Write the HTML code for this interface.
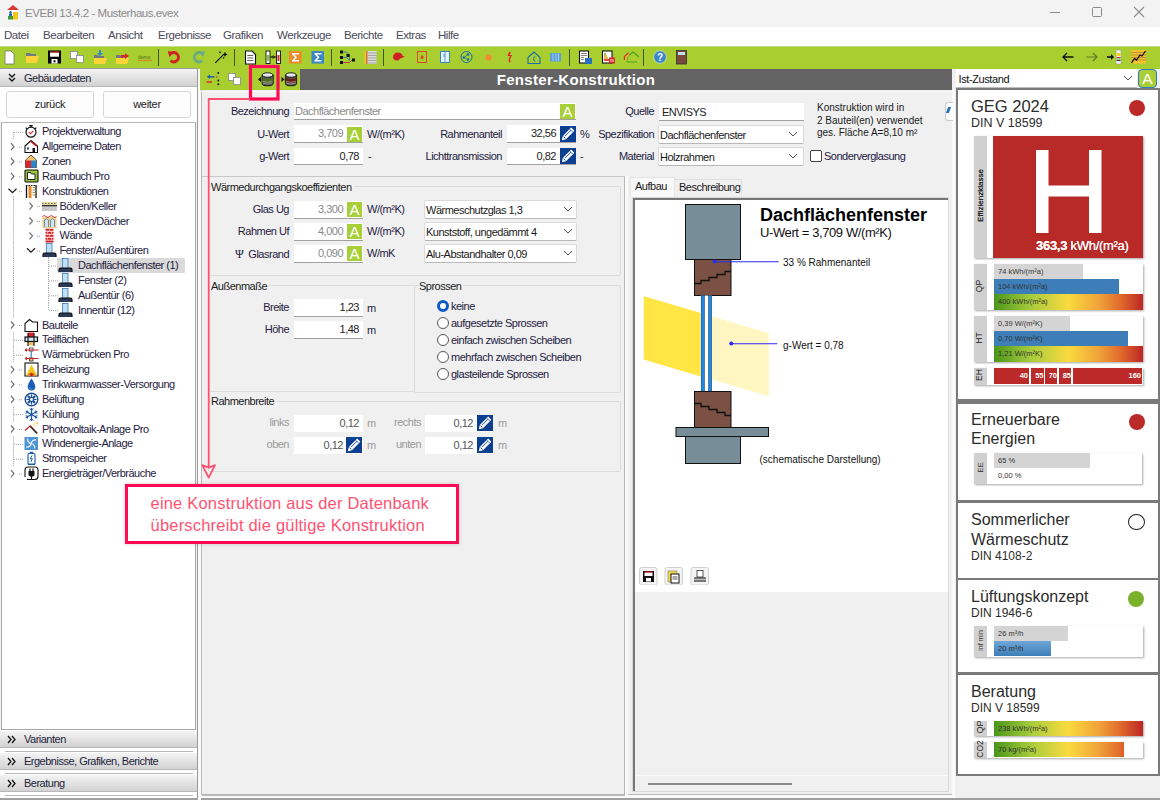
<!DOCTYPE html>
<html><head><meta charset="utf-8">
<style>
*{margin:0;padding:0;box-sizing:border-box}
html,body{width:1160px;height:800px;overflow:hidden;background:#f0f0f0;font-family:"Liberation Sans",sans-serif;font-size:11px;color:#1a1a1a;position:relative}
.a{position:absolute}
.menu span{position:absolute;top:0;font-size:11.5px;letter-spacing:-0.45px;color:#4a4a5a;white-space:nowrap}
.tr{letter-spacing:-0.5px;position:absolute;height:15px;font-size:11px;line-height:15px;color:#1e2040;white-space:nowrap}
.lbl{letter-spacing:-0.5px;position:absolute;font-size:11px;white-space:nowrap;color:#1e2040;text-align:right}
.inp{letter-spacing:-0.5px;position:absolute;background:#fff;border-bottom:1px solid #a0a0a0;font-size:11px;white-space:nowrap;overflow:hidden}
.num{text-align:right;padding-right:4px}
.btnA{position:absolute;background:#a9cf38;color:#fff;font-size:15px;line-height:16px;text-align:center}
.pen{position:absolute;background:#0d3d8c}
.dd{letter-spacing:-0.5px;position:absolute;background:#fff;border:1px solid #dadada;border-bottom:1px solid #b8b8b8;border-radius:2px;font-size:11px;white-space:nowrap;overflow:hidden;padding-left:1px}
.grp{position:absolute;border:1px solid #dcdcdc;border-radius:2px}
.gt{letter-spacing:-0.5px;position:absolute;font-size:11px;background:#f0f0f0;white-space:nowrap;color:#1a1a1a;padding-right:2px}
.radio{position:absolute;width:12px;height:12px;border:1px solid #333;border-radius:50%;background:#fff}
.rt{letter-spacing:-0.5px;position:absolute;font-size:11px;white-space:nowrap;color:#1e2040}
.acc{position:absolute;left:0;width:197px;height:17px;background:linear-gradient(#f4f4f4,#d2d2d2);border-bottom:1px solid #b8b8b8}
.acc span{letter-spacing:-0.5px;position:absolute;left:24px;top:2px;font-size:11px;color:#22223a}
.card{position:absolute;left:956px;width:204px;background:#fff}
.ct{position:absolute;left:15px;font-size:16px;color:#2b2b2b;white-space:nowrap}
.cs{position:absolute;left:15px;font-size:12px;color:#2b2b2b;white-space:nowrap}
.bx{position:absolute;background:#fff;box-shadow:1px 1px 2px rgba(0,0,0,0.35)}
.strip{position:absolute;left:0;top:0;width:13px;height:100%;background:#d0d0d0}
.bar{position:absolute;left:20px;font-size:7.5px;line-height:15px;padding-left:4px;color:#333;white-space:nowrap}
.grad{background:linear-gradient(90deg,#4a961a 0%,#a8cc3c 25%,#fada3e 50%,#f0a43a 70%,#e06a2c 85%,#bc2626 100%);background-size:149px 100%;background-repeat:no-repeat}
.vt{position:absolute;transform:rotate(-90deg);transform-origin:center;font-size:7px;white-space:nowrap;color:#333}
</style></head><body>
<!-- TITLE BAR -->
<div class="a" style="left:0;top:0;width:1160px;height:27px;background:#f3f3f3"></div>
<svg class="a" style="left:6px;top:4px" width="14" height="16" viewBox="0 0 14 16">
<path d="M1 6 L7 1 L13 6 Z" fill="#d9382f"/>
<rect x="2" y="6" width="10" height="9" fill="#fff"/>
<rect x="2" y="12" width="5" height="3.5" fill="#3d9a3a"/>
<rect x="7" y="8" width="5" height="7.5" fill="#f5c518"/>
<circle cx="4.5" cy="8.5" r="1.5" fill="#2a6db5"/>
<rect x="3" y="10" width="3" height="2" fill="#2a6db5"/>
</svg>
<div class="a" style="left:25px;top:7px;font-size:11.5px;letter-spacing:-0.45px;color:#8a8a8a;white-space:nowrap">EVEBI 13.4.2 - Musterhaus.evex</div>
<div class="a" style="left:1050px;top:12px;width:10px;height:1px;background:#8a8a8a"></div>
<div class="a" style="left:1092px;top:7px;width:10px;height:10px;border:1px solid #8a8a8a;border-radius:1.5px"></div>
<svg class="a" style="left:1133px;top:6px" width="12" height="12" viewBox="0 0 12 12"><path d="M1 1L11 11M11 1L1 11" stroke="#8a8a8a" stroke-width="1.1"/></svg>
<!-- MENU -->
<div class="a" style="left:0;top:27px;width:1160px;height:19px;background:#fff"></div>
<div class="a menu" style="top:29px">
<span style="left:4px">Datei</span><span style="left:43px">Bearbeiten</span><span style="left:108px">Ansicht</span><span style="left:158px">Ergebnisse</span><span style="left:223px">Grafiken</span><span style="left:277px">Werkzeuge</span><span style="left:344px">Berichte</span><span style="left:396px">Extras</span><span style="left:438px">Hilfe</span>
</div>
<!-- TOOLBAR -->
<div class="a" style="left:0;top:46px;width:1160px;height:23px;background:#a8cf2f;border-top:1px solid #c2e07a"></div>
<svg class="a" style="left:0;top:46px" width="1160" height="23" viewBox="0 46 1160 23">
<!-- new doc -->
<path d="M5 51h6l3 3v10h-9z" fill="#fff" stroke="#777" stroke-width="0.8"/>
<!-- folder -->
<path d="M26 53h4l1 1h5v2h-10z" fill="#6f7a80"/><path d="M26 56h13l-2 7h-11z" fill="#fdd33a"/>
<!-- save -->
<rect x="48" y="50.5" width="13" height="13" fill="#000"/><rect x="50" y="51.5" width="9" height="1.2" fill="#e02020"/><rect x="50" y="52.7" width="9" height="4" fill="#fff"/><rect x="51.5" y="59" width="6" height="4.5" fill="#fff"/><rect x="53.5" y="60.3" width="2" height="2" fill="#000"/>
<!-- copy -->
<rect x="70.5" y="51.5" width="7" height="7" fill="#fff" stroke="#888" stroke-width="0.8"/><rect x="76.5" y="55.5" width="7" height="7" fill="#fff" stroke="#888" stroke-width="0.8"/>
<!-- download folder -->
<path d="M94 55h4l1 1h5v2h-10z" fill="#6f7a80"/><path d="M94 58h13l-2 6h-11z" fill="#fdd33a"/><path d="M99 50h2v3h2l-3 3l-3-3h2z" fill="#2e86c9"/>
<!-- share folder -->
<path d="M116 55h4l1 1h5v2h-10z" fill="#6f7a80"/><path d="M116 58h13l-2 6h-11z" fill="#fdd33a"/><path d="M121 58v-3h4v-2l4 3l-4 3v-2h-2v1z" fill="#d8262d"/>
<!-- demo -->
<text x="138" y="59" font-size="5" fill="#5a6a20" font-family="Liberation Sans">demo</text><rect x="138" y="60" width="14" height="0.8" fill="#e07030"/>
<rect x="158" y="49" width="1" height="17" fill="#44571a"/>
<!-- undo -->
<path d="M172 53 A4.6 4.6 0 1 1 170.6 60.5" fill="none" stroke="#d02026" stroke-width="2.8"/><path d="M167.8 51.2 L174.5 51.8 L169.5 57.2 Z" fill="#d02026"/>
<!-- redo -->
<path d="M200.8 53 A4.6 4.6 0 1 0 202.2 60.5" fill="none" stroke="#6aaa80" stroke-width="2.8"/><path d="M205 51.2 L198.3 51.8 L203.3 57.2 Z" fill="#6aaa80"/>
<!-- wand -->
<path d="M215.3 62.8 L223.5 54.6" stroke="#111" stroke-width="1.1"/><path d="M225 51.8l0.8 1.8l1.8 0.8l-1.8 0.8l-0.8 1.8l-0.8-1.8l-1.8-0.8l1.8-0.8z" fill="#111"/><circle cx="220" cy="52.3" r="0.9" fill="#111"/><circle cx="223.6" cy="58" r="0.8" fill="#111"/>
<rect x="234" y="49" width="1" height="17" fill="#44571a"/>
<!-- doc -->
<path d="M245.5 51h6.5l3.5 3.5v9.5h-10z" fill="#fff" stroke="#111" stroke-width="1.1"/><path d="M247.3 55.5h6M247.3 58h6M247.3 60.5h6" stroke="#222" stroke-width="0.7"/>
<!-- compare -->
<rect x="266" y="51" width="4" height="12.5" fill="#fff" stroke="#111" stroke-width="0.9"/><rect x="276.5" y="51" width="4" height="12.5" fill="#fff" stroke="#111" stroke-width="0.9"/><path d="M267 55h2v6h-2z" fill="#7cc242"/><path d="M277.5 55h2v6h-2z" fill="#d8262d"/><path d="M270 57h6.5" stroke="#111" stroke-width="1"/><circle cx="273.2" cy="57" r="1.2" fill="none" stroke="#111" stroke-width="0.7"/>
<!-- sigma orange -->
<rect x="289" y="51" width="12.5" height="12.5" fill="#ee8a2c"/><path d="M292 53h7v1.5h-4.6l2.6 2.8l-2.6 2.8h4.6v1.5h-7v-1.2l3-3.1l-3-3.1z" fill="#fff"/>
<!-- sigma blue -->
<rect x="311.5" y="51" width="12.5" height="12.5" fill="#3b86c4"/><path d="M314.5 53h7v1.5h-4.6l2.6 2.8l-2.6 2.8h4.6v1.5h-7v-1.2l3-3.1l-3-3.1z" fill="#fff"/>
<rect x="331" y="49" width="1" height="17" fill="#44571a"/>
<!-- tree -->
<path d="M341.5 52h5l3 3v5M341.5 57.5h5l3 3M341.5 62.5h8l3-3" fill="none" stroke="#1b6fa8" stroke-width="0.8"/><path d="M341.5 62.5h8l3-3" fill="none" stroke="#d8262d" stroke-width="0.8"/>
<rect x="340" y="50.5" width="3" height="3" fill="#111"/><rect x="340" y="56" width="3" height="3" fill="#111"/><rect x="340" y="61" width="3" height="3" fill="#111"/><rect x="346.5" y="54" width="3" height="3" fill="#111"/><rect x="352" y="58.5" width="3" height="3" fill="#111"/>
<!-- brick list -->
<rect x="364.5" y="51" width="2" height="13" fill="#f7c22b"/><rect x="366.5" y="51" width="1" height="13" fill="#d8262d"/><rect x="367.5" y="51" width="9" height="13" fill="#ddd"/><path d="M367.5 53h9M367.5 55.5h9M367.5 58h9M367.5 60.5h9M367.5 63h9" stroke="#888" stroke-width="0.7"/>
<rect x="383" y="49" width="1" height="17" fill="#44571a"/>
<!-- cap -->
<path d="M393 58 Q393 52.5 398 52.5 Q402 52.5 402.5 56 L405 56.5 L403 57.5 Q400 58 398 60.5 Q394 61 393 58z" fill="#d02026"/>
<!-- fire frame -->
<rect x="417.5" y="51.5" width="9" height="11" fill="none" stroke="#e0482a" stroke-width="1"/><path d="M422 54.5q2 2 1.5 4q-1.5 1-3 0q0-2 1.5-4z" fill="#e0482a"/>
<!-- window frame -->
<rect x="440.5" y="51.5" width="9" height="11" fill="#e8f4fb" stroke="#3b86c4" stroke-width="1"/><path d="M445 52v10M444 54v3" stroke="#3b86c4" stroke-width="0.8"/>
<!-- network -->
<circle cx="466.5" cy="57" r="5.5" fill="none" stroke="#1b6fa8" stroke-width="1"/><circle cx="463.8" cy="57.5" r="1.3" fill="#1b6fa8"/><circle cx="468" cy="54.5" r="1.3" fill="#1b6fa8"/><circle cx="468" cy="59.5" r="1.3" fill="#1b6fa8"/><path d="M464 57.5l4-3M464 57.5l4 2" stroke="#1b6fa8" stroke-width="0.7"/>
<!-- sun -->
<circle cx="488.5" cy="57.5" r="3" fill="#f28b2e"/><path d="M488.5 51.5v1.5M488.5 62v1.5M482.5 57.5h1.5M493 57.5h1.5M484.3 53.3l1 1M491.7 60.7l1 1M484.3 61.7l1-1M491.7 54.3l1-1" stroke="#f5a45e" stroke-width="0.8"/>
<!-- lightning -->
<path d="M509 52l-1.5 4h2.5l-1.5 4l0.5 2.5l1.5-0.5l-0.5-2.5l2-4.5h-2.5l1.5-3z" fill="#d8262d"/>
<!-- house euro -->
<path d="M528 57.5l6-5.5l6 5.5v6h-12z" fill="none" stroke="#1b6fa8" stroke-width="1.1"/><path d="M535.5 56.5q-2 0-2 2.5q0 2.5 2 2.5" fill="none" stroke="#1b6fa8" stroke-width="0.9"/>
<!-- solar panel -->
<rect x="550" y="53" width="11" height="8.5" fill="#5aa0d6"/><path d="M553 53.5v7.5M556 53.5v7.5M558.5 53.5v7.5" stroke="#cfe6f5" stroke-width="0.6"/>
<rect x="569" y="49" width="1" height="17" fill="#44571a"/>
<!-- report -->
<rect x="579.5" y="51" width="9" height="12" fill="#fff" stroke="#111" stroke-width="1.1"/><path d="M581 53.5h6M581 55.5h6M581 57.5h3M581 59.5h3" stroke="#555" stroke-width="0.7"/><rect x="585" y="58" width="7" height="6" fill="#2a70c0"/>
<!-- energy cert -->
<rect x="602.5" y="51" width="9.5" height="12" fill="#fff" stroke="#111" stroke-width="1.1"/><path d="M604 54h2M604 56h3M604 58h4M604 60h5" stroke-width="1.4" stroke="#e0a020"/><path d="M604 54h2" stroke="#7cc242" stroke-width="1.4"/><path d="M604 60h5" stroke="#d8262d" stroke-width="1.4"/><rect x="609" y="57.5" width="6" height="6" fill="#d8262d"/><path d="M611 59v3M613 59v3" stroke="#fff" stroke-width="0.8"/>
<!-- colored house -->
<path d="M627 62v-5l6-5l6 5M627 62h10" fill="none" stroke="#4da020" stroke-width="1.2"/><path d="M624.5 60v-3.5l4-3.5" fill="none" stroke="#d8262d" stroke-width="1.3"/><path d="M626 61v-4l3-2.5" fill="none" stroke="#f7c22b" stroke-width="1.3"/>
<rect x="643" y="49" width="1" height="17" fill="#44571a"/>
<!-- help -->
<circle cx="660" cy="57" r="6.3" fill="#3b86c4" stroke="#e8f0e0" stroke-width="0.6"/><text x="660" y="61" font-size="10" font-weight="bold" fill="#fff" text-anchor="middle" font-family="Liberation Sans">?</text>
<!-- door -->
<rect x="676.5" y="50.5" width="10" height="13.5" fill="#7a4a3a" stroke="#333" stroke-width="0.8"/><rect x="678" y="52" width="7" height="3" fill="#bfe3f5"/>
<!-- right arrows -->
<path d="M1063 57h10.5M1067 53l-4 4l4 4" fill="none" stroke="#111" stroke-width="1.3"/>
<path d="M1086.5 57h10.5M1093 53l4 4l-4 4" fill="none" stroke="#5a7a28" stroke-width="1.1"/>
<path d="M1107 57h5" stroke="#111" stroke-width="1.6"/><path d="M1111 54l3 3l-3 3z" fill="#111"/>
<rect x="1116" y="50" width="5" height="14" fill="#eee" stroke="#999" stroke-width="0.5"/><rect x="1116.5" y="53" width="4" height="3" fill="#f7d21b"/><rect x="1116.5" y="57" width="4" height="1" fill="#d8262d"/><rect x="1116.5" y="58.5" width="4" height="1" fill="#4da020"/><rect x="1116.5" y="60" width="4" height="1" fill="#333"/>
<rect x="1131" y="50" width="15" height="13.5" fill="#f7c22b"/><path d="M1131 52.5h15M1131 55h15M1131 57.5h15M1131 60h15" stroke="#a88a40" stroke-width="0.8"/><path d="M1131.5 63l3-4.5l2 1.5l3.5-5l2 1l3.5-5" fill="none" stroke="#111" stroke-width="1.3"/>
</svg>
<!-- LEFT PANEL -->
<div class="a" style="left:0;top:69px;width:198px;height:731px;background:#f0f0f0"></div>
<div class="a" style="left:197px;top:68px;width:1px;height:732px;background:#9a9a9a"></div>
<div class="acc" style="top:68px;height:19px;border-top:1px solid #9a9a9a"><span style="top:3px">Gebäudedaten</span></div>
<svg class="a" style="left:8px;top:73px" width="8" height="10" viewBox="0 0 8 10"><path d="M1 1l3 3l3-3M1 5l3 3l3-3" fill="none" stroke="#111" stroke-width="1.3"/></svg>
<div class="a" style="left:0;top:87px;width:197px;height:35px;background:#fff"></div>
<div class="a" style="left:6px;top:91px;width:88px;height:27px;border:1px solid #d6d6d6;border-radius:3px;background:#fdfdfd;text-align:center;line-height:25px;font-size:11px;letter-spacing:-0.3px;color:#222">zurück</div>
<div class="a" style="left:103px;top:91px;width:88px;height:27px;border:1px solid #d6d6d6;border-radius:3px;background:#fdfdfd;text-align:center;line-height:25px;font-size:11px;letter-spacing:-0.3px;color:#222">weiter</div>
<div class="a" style="left:1px;top:122px;width:195px;height:608px;background:#fff;border:1px solid #a8a8a8;border-top-color:#b8b8b8"></div>
<svg class="a" style="left:0;top:122px" width="197" height="608" viewBox="0 122 197 608"><g stroke="#a0a0a0" stroke-width="1" stroke-dasharray="1,1" fill="none"><path d="M13.5 131.8 V139.2"/><path d="M14 132.3 H23"/><path d="M19 147.2 H23"/><path d="M19 162.0 H23"/><path d="M19 176.9 H23"/><path d="M19 191.7 H23"/><path d="M13.5 198.7 V213.5"/><path d="M37 206.6 H41"/><path d="M13.5 213.6 V228.4"/><path d="M37 221.5 H41"/><path d="M13.5 228.4 V243.2"/><path d="M37 236.3 H41"/><path d="M13.5 243.3 V258.1"/><path d="M37 251.2 H41"/><path d="M13.5 258.1 V272.9"/><path d="M48.5 258.1 V272.9"/><path d="M49 266.0 H58"/><path d="M13.5 273.0 V287.8"/><path d="M48.5 273.0 V287.8"/><path d="M49 280.9 H58"/><path d="M13.5 287.9 V302.7"/><path d="M48.5 287.9 V302.7"/><path d="M49 295.8 H58"/><path d="M13.5 302.7 V317.5"/><path d="M48.5 302.7 V310.1"/><path d="M49 310.6 H58"/><path d="M19 325.5 H23"/><path d="M13.5 332.4 V347.2"/><path d="M14 340.3 H23"/><path d="M13.5 347.3 V362.1"/><path d="M14 355.2 H23"/><path d="M19 370.1 H23"/><path d="M19 384.9 H23"/><path d="M19 399.8 H23"/><path d="M13.5 406.7 V421.5"/><path d="M14 414.6 H23"/><path d="M19 429.5 H23"/><path d="M13.5 436.5 V451.3"/><path d="M14 444.4 H23"/><path d="M13.5 451.3 V466.1"/><path d="M14 459.2 H23"/><path d="M19 474.1 H23"/><path d="M13.5 196.2 V198.6"/><path d="M48.5 256.7 V258.1"/></g><path d="M11.0 143.2l3 3.5l-3 3.5" fill="none" stroke="#707070" stroke-width="1.2"/><path d="M11.0 158.0l3 3.5l-3 3.5" fill="none" stroke="#707070" stroke-width="1.2"/><path d="M11.0 172.9l3 3.5l-3 3.5" fill="none" stroke="#707070" stroke-width="1.2"/><path d="M8.5 188.7l4 4l4-4" fill="none" stroke="#222" stroke-width="1.3"/><path d="M29.5 202.6l3 3.5l-3 3.5" fill="none" stroke="#707070" stroke-width="1.2"/><path d="M29.5 217.5l3 3.5l-3 3.5" fill="none" stroke="#707070" stroke-width="1.2"/><path d="M29.5 232.3l3 3.5l-3 3.5" fill="none" stroke="#707070" stroke-width="1.2"/><path d="M27.0 248.2l4 4l4-4" fill="none" stroke="#222" stroke-width="1.3"/><path d="M11.0 321.5l3 3.5l-3 3.5" fill="none" stroke="#707070" stroke-width="1.2"/><path d="M11.0 366.1l3 3.5l-3 3.5" fill="none" stroke="#707070" stroke-width="1.2"/><path d="M11.0 380.9l3 3.5l-3 3.5" fill="none" stroke="#707070" stroke-width="1.2"/><path d="M11.0 395.8l3 3.5l-3 3.5" fill="none" stroke="#707070" stroke-width="1.2"/><path d="M11.0 425.5l3 3.5l-3 3.5" fill="none" stroke="#707070" stroke-width="1.2"/><path d="M11.0 470.1l3 3.5l-3 3.5" fill="none" stroke="#707070" stroke-width="1.2"/></svg>
<div class="a" style="left:57px;top:258px;width:128px;height:15px;background:#dadada;border-radius:1px"></div>
<svg class="a" style="left:23.5px;top:124.3px" width="15" height="15" viewBox="0 0 15 15"><circle cx="7" cy="8.2" r="5" fill="#fff" stroke="#111" stroke-width="1.2"/><path d="M5.3 1.6h3.4M7 2v1.2M1.8 3.6l1.2 1.2M12.2 3.6l-1.2 1.2" stroke="#111" stroke-width="1.2"/><path d="M4.8 8.2l1.7 1.6l2.8-3" fill="none" stroke="#d02026" stroke-width="1.1"/></svg>
<div class="tr" style="left:42.0px;top:124.3px">Projektverwaltung</div>
<svg class="a" style="left:23.5px;top:139.2px" width="15" height="15" viewBox="0 0 15 15"><path d="M1 7l6-5.5l6.5 5.5v6.5h-12.5z" fill="#fff" stroke="#111" stroke-width="1.1"/><path d="M6.5 1.5l7 5.5l-1.5 0.6l-5.5-4.4z" fill="#d02026"/><ellipse cx="4" cy="9.5" rx="1" ry="1.4" fill="#2a5a9a"/><rect x="8.5" y="9" width="2.5" height="4.5" fill="#111"/></svg>
<div class="tr" style="left:42.0px;top:139.2px">Allgemeine Daten</div>
<svg class="a" style="left:23.5px;top:154.0px" width="15" height="15" viewBox="0 0 15 15"><path d="M1.5 6l5.5-5l5.5 5v7.5h-11z" fill="#f2c26a" stroke="#333" stroke-width="0.8"/><rect x="1.5" y="6.5" width="5.5" height="7" fill="#d8262d"/><rect x="7" y="6.5" width="5.5" height="7" fill="#2e86c9"/></svg>
<div class="tr" style="left:42.0px;top:154.0px">Zonen</div>
<svg class="a" style="left:23.5px;top:168.9px" width="15" height="15" viewBox="0 0 15 15"><rect x="1" y="1" width="13" height="12" rx="1" fill="#9ac43a" stroke="#111" stroke-width="1.1"/><path d="M3.5 3.5h3l1 1.5h3.5v5.5h-7.5z" fill="#fff" stroke="#111" stroke-width="0.9"/></svg>
<div class="tr" style="left:42.0px;top:168.9px">Raumbuch Pro</div>
<svg class="a" style="left:23.5px;top:183.7px" width="15" height="15" viewBox="0 0 15 15"><rect x="2" y="1" width="10" height="13" fill="#fff"/><rect x="4.5" y="2" width="3" height="12" fill="#ef8a2c"/><path d="M2.5 1v13M12 1v13" stroke="#111" stroke-width="1.3"/><path d="M8.5 3.5h3M8.5 6h3M8.5 8.5h3M8.5 11h3" stroke="#9a9a50" stroke-width="1"/><path d="M2 1.5h10" stroke="#111" stroke-width="1" stroke-dasharray="1.5,1"/></svg>
<div class="tr" style="left:42.0px;top:183.7px">Konstruktionen</div>
<svg class="a" style="left:41.5px;top:198.6px" width="15" height="15" viewBox="0 0 15 15"><rect x="0" y="3" width="15" height="3" fill="#e8d8a0"/><rect x="0" y="6" width="15" height="1.5" fill="#333"/><rect x="0" y="8" width="15" height="4" fill="#c8c8c8"/><path d="M0 4.5h15" stroke="#555" stroke-dasharray="1.5,1.5" stroke-width="0.8"/></svg>
<div class="tr" style="left:59.5px;top:198.6px">Böden/Keller</div>
<svg class="a" style="left:41.5px;top:213.5px" width="15" height="15" viewBox="0 0 15 15"><rect x="0.5" y="3" width="14" height="11" fill="#eed28a"/><path d="M0.5 2.5q1.7-2 3.5 0t3.5 0t3.5 0t3.5 0" fill="none" stroke="#d02026" stroke-width="0.9"/><path d="M2.5 13v-7q2-2.5 4 0v7M8.5 13v-7q2-2.5 4 0v7" fill="#cfe4f3" stroke="#5a7a9a" stroke-width="0.8"/></svg>
<div class="tr" style="left:59.5px;top:213.5px">Decken/Dächer</div>
<svg class="a" style="left:41.5px;top:228.3px" width="15" height="15" viewBox="0 0 15 15"><rect x="3.5" y="0.5" width="8" height="14" fill="#fff"/><path d="M3.5 1.7h8M3.5 4.7h8M3.5 7.7h8M3.5 10.7h8M3.5 13.5h8" stroke="#d02026" stroke-width="2.1"/><path d="M7.5 1v1.5M5.5 4v1.5M9.5 4v1.5M7.5 7v1.5M5.5 10v1.5M9.5 10v1.5" stroke="#fff" stroke-width="0.6"/></svg>
<div class="tr" style="left:59.5px;top:228.3px">Wände</div>
<svg class="a" style="left:41.5px;top:243.2px" width="15" height="15" viewBox="0 0 15 15"><rect x="4.5" y="0.5" width="5.5" height="10" fill="#bfe0f5" stroke="#3b7cc0" stroke-width="0.8"/><path d="M1 14v-2.2q0-1.6 1.6-1.6h9.8q1.6 0 1.6 1.6v2.2" fill="#2a3a5a" stroke="#111" stroke-width="1.2"/></svg>
<div class="tr" style="left:59.5px;top:243.2px">Fenster/Außentüren</div>
<svg class="a" style="left:58.0px;top:258.0px" width="15" height="15" viewBox="0 0 15 15"><rect x="4.5" y="0.5" width="5.5" height="10" fill="#bfe0f5" stroke="#3b7cc0" stroke-width="0.8"/><path d="M1 14v-2.2q0-1.6 1.6-1.6h9.8q1.6 0 1.6 1.6v2.2" fill="#2a3a5a" stroke="#111" stroke-width="1.2"/></svg>
<div class="tr" style="left:78.0px;top:258.0px">Dachflächenfenster (1)</div>
<svg class="a" style="left:58.0px;top:272.9px" width="15" height="15" viewBox="0 0 15 15"><rect x="4.5" y="0.5" width="5.5" height="10" fill="#bfe0f5" stroke="#3b7cc0" stroke-width="0.8"/><path d="M1 14v-2.2q0-1.6 1.6-1.6h9.8q1.6 0 1.6 1.6v2.2" fill="#2a3a5a" stroke="#111" stroke-width="1.2"/></svg>
<div class="tr" style="left:78.0px;top:272.9px">Fenster (2)</div>
<svg class="a" style="left:58.0px;top:287.8px" width="15" height="15" viewBox="0 0 15 15"><rect x="4.5" y="0.5" width="5.5" height="10" fill="#bfe0f5" stroke="#3b7cc0" stroke-width="0.8"/><path d="M1 14v-2.2q0-1.6 1.6-1.6h9.8q1.6 0 1.6 1.6v2.2" fill="#2a3a5a" stroke="#111" stroke-width="1.2"/></svg>
<div class="tr" style="left:78.0px;top:287.8px">Außentür (6)</div>
<svg class="a" style="left:58.0px;top:302.6px" width="15" height="15" viewBox="0 0 15 15"><rect x="4.5" y="0.5" width="5.5" height="10" fill="#bfe0f5" stroke="#3b7cc0" stroke-width="0.8"/><path d="M1 14v-2.2q0-1.6 1.6-1.6h9.8q1.6 0 1.6 1.6v2.2" fill="#2a3a5a" stroke="#111" stroke-width="1.2"/></svg>
<div class="tr" style="left:78.0px;top:302.6px">Innentür (12)</div>
<svg class="a" style="left:23.5px;top:317.5px" width="15" height="15" viewBox="0 0 15 15"><path d="M1 13.5v-8l4.5-4l3 2.5h5v9.5z" fill="#fff" stroke="#111" stroke-width="1.1"/></svg>
<div class="tr" style="left:42.0px;top:317.5px">Bauteile</div>
<svg class="a" style="left:23.5px;top:332.3px" width="15" height="15" viewBox="0 0 15 15"><rect x="4" y="0.5" width="6" height="4.5" fill="#d8262d"/><rect x="4" y="9.5" width="6" height="4" fill="#f2c26a"/><rect x="1" y="5" width="12.5" height="4.5" fill="#cfe4f3" stroke="#111" stroke-width="1.2"/><path d="M4 1v13M10 1v13" stroke="#111" stroke-width="1.1"/></svg>
<div class="tr" style="left:42.0px;top:332.3px">Teilflächen</div>
<svg class="a" style="left:23.5px;top:347.2px" width="15" height="15" viewBox="0 0 15 15"><rect x="5.5" y="1" width="3.5" height="3" fill="#fff" stroke="#333" stroke-width="0.8"/><rect x="5.5" y="11" width="3.5" height="3" fill="#f2c26a" stroke="#333" stroke-width="0.8"/><path d="M7.2 4v7" stroke="#3b7cc0" stroke-width="1.2"/><path d="M1.5 3h13M1.5 11.5h13" stroke="#d02026" stroke-width="1.1"/><path d="M3 1.5l-2 1.5l2 1.5M3 10l-2 1.5l2 1.5" fill="#d02026" stroke="#d02026" stroke-width="0.8"/></svg>
<div class="tr" style="left:42.0px;top:347.2px">Wärmebrücken Pro</div>
<svg class="a" style="left:23.5px;top:362.1px" width="15" height="15" viewBox="0 0 15 15"><rect x="1" y="1" width="13" height="13" fill="#fff" stroke="#111" stroke-width="1.1"/><path d="M2 13.5l5.5-11l5.5 11z" fill="#f5c518"/><path d="M3.5 13.5q4-6 8 0z" fill="#e8701a"/><circle cx="7.5" cy="12.5" r="1.5" fill="#c02020"/></svg>
<div class="tr" style="left:42.0px;top:362.1px">Beheizung</div>
<svg class="a" style="left:23.5px;top:376.9px" width="15" height="15" viewBox="0 0 15 15"><path d="M7.5 1.5q3.8 5.5 3.8 8.2a3.8 3.8 0 0 1-7.6 0q0-2.7 3.8-8.2z" fill="#1a5fb4"/><path d="M5.5 10.5q0.5 1.5 2 1.8" stroke="#8ab8e8" stroke-width="0.7" fill="none"/></svg>
<div class="tr" style="left:42.0px;top:376.9px">Trinkwarmwasser-Versorgung</div>
<svg class="a" style="left:23.5px;top:391.8px" width="15" height="15" viewBox="0 0 15 15"><circle cx="7.5" cy="7.5" r="6.3" fill="#fff" stroke="#1a4f9a" stroke-width="1.4"/><g fill="#1a4f9a"><path d="M7.5 7.5q-1.5-4 0-5.5q1.5 1.5 0 5.5z"/><path d="M7.5 7.5q4-1.5 5.5 0q-1.5 1.5-5.5 0z"/><path d="M7.5 7.5q1.5 4 0 5.5q-1.5-1.5 0-5.5z"/><path d="M7.5 7.5q-4 1.5-5.5 0q1.5-1.5 5.5 0z"/></g><path d="M7.5 2.5v10M2.5 7.5h10" stroke="#1a4f9a" stroke-width="2.2" transform="rotate(45 7.5 7.5)"/><circle cx="7.5" cy="7.5" r="1.4" fill="#fff"/></svg>
<div class="tr" style="left:42.0px;top:391.8px">Belüftung</div>
<svg class="a" style="left:23.5px;top:406.6px" width="15" height="15" viewBox="0 0 15 15"><path d="M7.5 1v13M1.8 4.2l11.4 6.6M1.8 10.8l11.4-6.6" stroke="#1a5aa8" stroke-width="1.3"/><path d="M5.8 1.5l1.7 2l1.7-2M5.8 13.5l1.7-2l1.7 2M1.5 6.2l2.5-0.5l-0.8-2.3M13.5 8.8l-2.5 0.5l0.8 2.3M1.5 8.8l2.5 0.5l-0.8 2.3M13.5 6.2l-2.5-0.5l0.8-2.3" fill="none" stroke="#1a5aa8" stroke-width="1"/></svg>
<div class="tr" style="left:42.0px;top:406.6px">Kühlung</div>
<svg class="a" style="left:23.5px;top:421.5px" width="15" height="15" viewBox="0 0 15 15"><path d="M1 8.5l5-4.5" stroke="#c02020" stroke-width="1.2"/><path d="M6 4l7 7.5" stroke="#333" stroke-width="1.8"/><path d="M6.3 3.2l7 7.5" stroke="#c02020" stroke-width="0.6"/><path d="M11.5 0.5l2.5 0l0 2.5z" fill="#f5c518"/><path d="M9.5 3l1 -0.5M11.5 4.5l0.5-1M10 1.8l0.8 0" stroke="#f5c518" stroke-width="0.8"/></svg>
<div class="tr" style="left:42.0px;top:421.5px">Photovoltaik-Anlage Pro</div>
<svg class="a" style="left:23.5px;top:436.4px" width="15" height="15" viewBox="0 0 15 15"><rect x="0.5" y="1" width="13.5" height="13" fill="#4d95d0"/><path d="M7.2 7.5q-4-1-3.5-5M7.2 7.5q1-4 5-3.5M7.2 7.5q4 1 3.5 5M7.2 7.5q-1 4-5 3.5" fill="none" stroke="#e8f3fb" stroke-width="1.2"/></svg>
<div class="tr" style="left:42.0px;top:436.4px">Windenergie-Anlage</div>
<svg class="a" style="left:23.5px;top:451.2px" width="15" height="15" viewBox="0 0 15 15"><rect x="4" y="2.5" width="7" height="11" rx="1" fill="#fff" stroke="#1a5aa8" stroke-width="1.1"/><rect x="5.8" y="0.8" width="3.4" height="1.6" fill="#1a5aa8"/><rect x="4" y="12.5" width="7" height="1.2" fill="#1a5aa8"/><path d="M8 4.5l-1.8 3.2h2.2l-1.6 3.2" fill="none" stroke="#1a5aa8" stroke-width="1"/></svg>
<div class="tr" style="left:42.0px;top:451.2px">Stromspeicher</div>
<svg class="a" style="left:23.5px;top:466.1px" width="15" height="15" viewBox="0 0 15 15"><rect x="1" y="1" width="13" height="12.5" rx="3" fill="#fff" stroke="#111" stroke-width="1.1"/><path d="M4.5 5h6v3.5q0 2-3 2t-3-2z" fill="#111"/><path d="M6 2.5v2.5M9 2.5v2.5M7.5 10v4" stroke="#111" stroke-width="1.2"/><rect x="0" y="11" width="3" height="4" fill="#fff"/></svg>
<div class="tr" style="left:42.0px;top:466.1px">Energieträger/Verbräuche</div>
<div class="a" style="left:0;top:730px;width:197px;height:70px;background:#fff"></div>
<div class="acc" style="top:731px"><span>Varianten</span></div>
<svg class="a" style="left:7px;top:735px" width="10" height="9" viewBox="0 0 10 9"><path d="M1 1l3 3.5l-3 3.5M5 1l3 3.5l-3 3.5" fill="none" stroke="#111" stroke-width="1.3"/></svg>
<div class="a" style="left:5px;top:751px;width:188px;height:1px;background:#b8b8b8"></div>
<div class="acc" style="top:753px"><span>Ergebnisse, Grafiken, Berichte</span></div>
<svg class="a" style="left:7px;top:757px" width="10" height="9" viewBox="0 0 10 9"><path d="M1 1l3 3.5l-3 3.5M5 1l3 3.5l-3 3.5" fill="none" stroke="#111" stroke-width="1.3"/></svg>
<div class="a" style="left:5px;top:773px;width:188px;height:1px;background:#b8b8b8"></div>
<div class="acc" style="top:775px"><span>Beratung</span></div>
<svg class="a" style="left:7px;top:779px" width="10" height="9" viewBox="0 0 10 9"><path d="M1 1l3 3.5l-3 3.5M5 1l3 3.5l-3 3.5" fill="none" stroke="#111" stroke-width="1.3"/></svg>
<div class="a" style="left:5px;top:795px;width:188px;height:1px;background:#b8b8b8"></div>
<div class="a" style="left:0;top:798px;width:1160px;height:2px;background:#a0a0a0"></div><!-- MIDDLE PANEL -->
<div class="a" style="left:198px;top:69px;width:3px;height:731px;background:#fafafa"></div>
<div class="a" style="left:200px;top:69px;width:100px;height:21px;background:#a8cf2f"></div>
<div class="a" style="left:300px;top:69px;width:652px;height:21px;background:#636363"></div>
<div class="a" style="left:200px;top:71px;width:752px;font-size:15px;font-weight:bold;color:#fff;text-align:center;letter-spacing:0.3px">Fenster-Konstruktion</div>
<svg class="a" style="left:200px;top:69px" width="100" height="21" viewBox="200 69 100 21">
<path d="M208.5 76.8h6" stroke="#1d5cb0" stroke-width="1.5"/><path d="M210 74.5l-3.2 2.3l3.2 2.3z" fill="#1d5cb0"/><path d="M206.5 82h5.5" stroke="#d8262d" stroke-width="1.5"/><circle cx="216.6" cy="77" r="0.8" fill="#d8262d"/>
<circle cx="218.3" cy="73" r="0.95" fill="#111"/><circle cx="218.3" cy="80.5" r="0.95" fill="#111"/><circle cx="218.3" cy="84.3" r="0.95" fill="#111"/>
<rect x="228.5" y="73.5" width="7" height="7" fill="#fff" stroke="#888" stroke-width="0.8"/><rect x="233.5" y="77.5" width="7" height="7" fill="#fff" stroke="#888" stroke-width="0.8"/>
<path d="M258 79.4l3-2.6v5.2z" fill="#111"/>
<path d="M262 75v8.5q0 2.3 5.6 2.3t5.6-2.3v-8.5z" fill="#555" stroke="#111" stroke-width="0.9"/>
<path d="M262.4 76.5q0 2.3 5.2 2.3t5.2-2.3v4.5q0 2-5.2 2t-5.2-2z" fill="#4f6f1f"/>
<path d="M262.5 81.3q5 2 10 0M262.5 83q5 2 10 0" fill="none" stroke="#bbb" stroke-width="0.6"/>
<ellipse cx="267.6" cy="75" rx="5.4" ry="2.2" fill="#e6e6e6" stroke="#111" stroke-width="0.9"/>
<path d="M284.5 79.4l-3-2.6v5.2z" fill="#111"/>
<path d="M285.4 75v8.5q0 2.3 5.6 2.3t5.6-2.3v-8.5z" fill="#555" stroke="#111" stroke-width="0.9"/>
<path d="M285.8 76.5q0 2.3 5.2 2.3t5.2-2.3v4.5q0 2-5.2 2t-5.2-2z" fill="#6a1a1a"/>
<path d="M285.9 81.3q5 2 10 0M285.9 83q5 2 10 0" fill="none" stroke="#bbb" stroke-width="0.6"/>
<ellipse cx="291" cy="75" rx="5.4" ry="2.2" fill="#e6e6e6" stroke="#111" stroke-width="0.9"/>
</svg>
<!-- container -->
<div class="a" style="left:201px;top:90px;width:754px;height:708px;background:#fafafa"></div>
<div class="a" style="left:201px;top:90px;width:751px;height:705px;background:#f0f0f0;border-left:1px solid #b8b8b8;border-bottom:1px solid #b8b8b8"></div>
<div class="a" style="left:201px;top:91px;width:751px;height:1px;background:#f8f8f8"></div>
<!-- top fields -->
<div class="lbl" style="left:210px;top:105px;width:79px">Bezeichnung</div>
<div class="inp" style="left:294px;top:103px;width:282px;height:17px;color:#8a8a8a;padding:2px 0 0 1px">Dachflächenfenster</div>
<div class="btnA" style="left:560px;top:104px;width:15px;height:15px">A</div>
<div class="lbl" style="left:210px;top:128px;width:79px">U-Wert</div>
<div class="inp num" style="left:294px;top:125px;width:69px;height:18px;color:#8a8a8a;padding-right:20px;padding-top:2px">3,709</div>
<div class="btnA" style="left:347px;top:127px;width:15px;height:15px">A</div>
<div class="rt" style="left:367px;top:128px">W/(m²K)</div>
<div class="lbl" style="left:210px;top:150px;width:79px">g-Wert</div>
<div class="inp num" style="left:294px;top:148px;width:69px;height:17px;color:#222;padding-top:2px">0,78</div>
<div class="rt" style="left:368px;top:150px">-</div>
<div class="lbl" style="left:400px;top:128px;width:102px">Rahmenanteil</div>
<div class="inp num" style="left:507px;top:125px;width:69px;height:18px;color:#222;padding-right:20px;padding-top:2px">32,56</div>
<div class="lbl" style="left:400px;top:150px;width:102px">Lichttransmission</div>
<div class="inp num" style="left:507px;top:148px;width:69px;height:17px;color:#222;padding-right:20px;padding-top:2px">0,82</div>
<div class="rt" style="left:580px;top:128px">%</div>
<div class="rt" style="left:580px;top:150px">-</div>
<div class="lbl" style="left:580px;top:105px;width:74px">Quelle</div>
<div class="lbl" style="left:580px;top:128px;width:74px">Spezifikation</div>
<div class="lbl" style="left:580px;top:150px;width:74px">Material</div>
<div class="inp" style="left:659px;top:103px;width:145px;height:18px;color:#222;padding:3px 0 0 3px">ENVISYS</div>
<div class="dd" style="left:658px;top:125px;width:146px;height:19px;padding-top:3px">Dachflächenfenster</div>
<div class="dd" style="left:658px;top:147px;width:146px;height:19px;padding-top:3px">Holzrahmen</div>
<div class="a" style="left:817px;top:102px;font-size:10px;line-height:12.5px;color:#1a1a1a;white-space:nowrap">Konstruktion wird in<br>2 Bauteil(en) verwendet<br>ges. Fläche A=8,10 m²</div>
<div class="a" style="left:810px;top:150px;width:12px;height:12px;border:1px solid #444;border-radius:2px;background:#fff"></div>
<div class="rt" style="left:824px;top:150px">Sonderverglasung</div>
<div class="a" style="left:945px;top:102px;width:8px;height:19px;border:1px solid #ccc;border-right:none;border-radius:3px 0 0 3px;background:#fff"></div>
<div class="a" style="left:947px;top:107px;width:3px;height:6px;background:#2a70c0;transform:skewX(-20deg)"></div>
<!-- outer content frame -->
<div class="a" style="left:202px;top:176px;width:423px;height:620px;border-top:1px solid #c8c8c8;border-right:1px solid #b8b8b8;border-bottom:1px solid #b8b8b8"></div>
<div class="a" style="left:625px;top:176px;width:3px;height:620px;background:#fafafa"></div>
<!-- pencils -->
<svg class="a" style="left:560px;top:126px" width="16" height="16" viewBox="0 0 16 16"><rect width="16" height="16" fill="#0c3f8f"/><path d="M1.8 14.2l1-4.2l8.4-8.4l3.2 3.2l-8.4 8.4z" fill="#fff"/><path d="M3.6 10.6l1.8 1.8" stroke="#0c3f8f" stroke-width="0.9"/><path d="M5 10.2l6.2-6.2" stroke="#0c3f8f" stroke-width="0.9"/><path d="M9.8 3.2l3 3" stroke="#0c3f8f" stroke-width="0.7"/></svg>
<svg class="a" style="left:560px;top:148px" width="16" height="16" viewBox="0 0 16 16"><rect width="16" height="16" fill="#0c3f8f"/><path d="M1.8 14.2l1-4.2l8.4-8.4l3.2 3.2l-8.4 8.4z" fill="#fff"/><path d="M3.6 10.6l1.8 1.8" stroke="#0c3f8f" stroke-width="0.9"/><path d="M5 10.2l6.2-6.2" stroke="#0c3f8f" stroke-width="0.9"/><path d="M9.8 3.2l3 3" stroke="#0c3f8f" stroke-width="0.7"/></svg>
<!-- dropdown arrows -->
<svg class="a" style="left:788px;top:131px" width="10" height="6" viewBox="0 0 10 6"><path d="M1 1l4 4l4-4" fill="none" stroke="#555" stroke-width="1"/></svg>
<svg class="a" style="left:788px;top:153px" width="10" height="6" viewBox="0 0 10 6"><path d="M1 1l4 4l4-4" fill="none" stroke="#555" stroke-width="1"/></svg>
<!-- Wärmedurchgangskoeffizienten group -->
<div class="grp" style="left:208px;top:186px;width:413px;height:90px"></div>
<div class="gt" style="left:211px;top:181px">Wärmedurchgangskoeffizienten</div>
<div class="lbl" style="left:210px;top:203px;width:79px">Glas Ug</div>
<div class="inp num" style="left:294px;top:201px;width:69px;height:18px;color:#8a8a8a;padding-right:20px;padding-top:2px">3,300</div>
<div class="btnA" style="left:347px;top:202px;width:15px;height:15px">A</div>
<div class="rt" style="left:367px;top:203px">W/(m²K)</div>
<div class="lbl" style="left:210px;top:225px;width:79px">Rahmen Uf</div>
<div class="inp num" style="left:294px;top:223px;width:69px;height:18px;color:#8a8a8a;padding-right:20px;padding-top:2px">4,000</div>
<div class="btnA" style="left:347px;top:224px;width:15px;height:15px">A</div>
<div class="rt" style="left:367px;top:225px">W/(m²K)</div>
<div class="lbl" style="left:210px;top:247px;width:79px"><span style="font-family:'Liberation Serif';font-size:12px">Ψ</span>&nbsp; Glasrand</div>
<div class="inp num" style="left:294px;top:245px;width:69px;height:18px;color:#8a8a8a;padding-right:20px;padding-top:2px">0,090</div>
<div class="btnA" style="left:347px;top:246px;width:15px;height:15px">A</div>
<div class="rt" style="left:367px;top:247px">W/mK</div>
<div class="dd" style="left:424px;top:200px;width:153px;height:19px;padding-top:3px">Wärmeschutzglas 1,3</div>
<div class="dd" style="left:424px;top:222px;width:153px;height:19px;padding-top:3px">Kunststoff, ungedämmt 4</div>
<div class="dd" style="left:424px;top:244px;width:153px;height:19px;padding-top:3px">Alu-Abstandhalter 0,09</div>
<svg class="a" style="left:563px;top:206px" width="10" height="6" viewBox="0 0 10 6"><path d="M1 1l4 4l4-4" fill="none" stroke="#555" stroke-width="1"/></svg>
<svg class="a" style="left:563px;top:228px" width="10" height="6" viewBox="0 0 10 6"><path d="M1 1l4 4l4-4" fill="none" stroke="#555" stroke-width="1"/></svg>
<svg class="a" style="left:563px;top:250px" width="10" height="6" viewBox="0 0 10 6"><path d="M1 1l4 4l4-4" fill="none" stroke="#555" stroke-width="1"/></svg>
<!-- Außenmaße -->
<div class="grp" style="left:208px;top:285px;width:207px;height:107px"></div>
<div class="gt" style="left:211px;top:280px">Außenmaße</div>
<div class="lbl" style="left:210px;top:301px;width:79px">Breite</div>
<div class="inp num" style="left:294px;top:299px;width:69px;height:18px;color:#222;padding-top:2px">1,23</div>
<div class="rt" style="left:367px;top:302px">m</div>
<div class="lbl" style="left:210px;top:323px;width:79px">Höhe</div>
<div class="inp num" style="left:294px;top:321px;width:69px;height:18px;color:#222;padding-top:2px">1,48</div>
<div class="rt" style="left:367px;top:324px">m</div>
<!-- Sprossen -->
<div class="grp" style="left:414px;top:285px;width:207px;height:108px"></div>
<div class="gt" style="left:419px;top:280px">Sprossen</div>
<div class="radio" style="left:437px;top:300px;border:3.5px solid #0a5bc4"></div>
<div class="rt" style="left:451px;top:300px">keine</div>
<div class="radio" style="left:437px;top:317px;border-color:#555"></div>
<div class="rt" style="left:451px;top:317px">aufgesetzte Sprossen</div>
<div class="radio" style="left:437px;top:334px;border-color:#555"></div>
<div class="rt" style="left:451px;top:334px">einfach zwischen Scheiben</div>
<div class="radio" style="left:437px;top:351px;border-color:#555"></div>
<div class="rt" style="left:451px;top:351px">mehrfach zwischen Scheiben</div>
<div class="radio" style="left:437px;top:368px;border-color:#555"></div>
<div class="rt" style="left:451px;top:368px">glasteilende Sprossen</div>
<!-- Rahmenbreite -->
<div class="grp" style="left:208px;top:401px;width:413px;height:71px"></div>
<div class="gt" style="left:211px;top:395px">Rahmenbreite</div>
<div class="lbl" style="left:240px;top:416px;width:49px;color:#9a9a9a">links</div>
<div class="inp num" style="left:294px;top:415px;width:69px;height:17px;color:#555;padding-top:2px;border-bottom:none">0,12</div>
<div class="rt" style="left:367px;top:417px;color:#9a9a9a">m</div>
<div class="lbl" style="left:370px;top:416px;width:51px;color:#9a9a9a">rechts</div>
<div class="inp num" style="left:425px;top:415px;width:68px;height:17px;color:#555;padding-right:20px;padding-top:2px;border-bottom:none">0,12</div>
<div class="rt" style="left:498px;top:417px;color:#9a9a9a">m</div>
<div class="lbl" style="left:240px;top:438px;width:49px;color:#9a9a9a">oben</div>
<div class="inp num" style="left:294px;top:437px;width:69px;height:17px;color:#555;padding-right:20px;padding-top:2px;border-bottom:none">0,12</div>
<div class="rt" style="left:367px;top:439px;color:#9a9a9a">m</div>
<div class="lbl" style="left:370px;top:438px;width:51px;color:#9a9a9a">unten</div>
<div class="inp num" style="left:425px;top:437px;width:68px;height:17px;color:#555;padding-right:20px;padding-top:2px;border-bottom:none">0,12</div>
<div class="rt" style="left:498px;top:439px;color:#9a9a9a">m</div>
<svg class="a" style="left:477px;top:415px" width="16" height="16" viewBox="0 0 16 16"><rect width="16" height="16" fill="#0c3f8f"/><path d="M1.8 14.2l1-4.2l8.4-8.4l3.2 3.2l-8.4 8.4z" fill="#fff"/><path d="M3.6 10.6l1.8 1.8" stroke="#0c3f8f" stroke-width="0.9"/><path d="M5 10.2l6.2-6.2" stroke="#0c3f8f" stroke-width="0.9"/><path d="M9.8 3.2l3 3" stroke="#0c3f8f" stroke-width="0.7"/></svg>
<svg class="a" style="left:346px;top:437px" width="16" height="16" viewBox="0 0 16 16"><rect width="16" height="16" fill="#0c3f8f"/><path d="M1.8 14.2l1-4.2l8.4-8.4l3.2 3.2l-8.4 8.4z" fill="#fff"/><path d="M3.6 10.6l1.8 1.8" stroke="#0c3f8f" stroke-width="0.9"/><path d="M5 10.2l6.2-6.2" stroke="#0c3f8f" stroke-width="0.9"/><path d="M9.8 3.2l3 3" stroke="#0c3f8f" stroke-width="0.7"/></svg>
<svg class="a" style="left:477px;top:437px" width="16" height="16" viewBox="0 0 16 16"><rect width="16" height="16" fill="#0c3f8f"/><path d="M1.8 14.2l1-4.2l8.4-8.4l3.2 3.2l-8.4 8.4z" fill="#fff"/><path d="M3.6 10.6l1.8 1.8" stroke="#0c3f8f" stroke-width="0.9"/><path d="M5 10.2l6.2-6.2" stroke="#0c3f8f" stroke-width="0.9"/><path d="M9.8 3.2l3 3" stroke="#0c3f8f" stroke-width="0.7"/></svg>
<!-- TABS + DRAWING -->
<div class="a" style="left:630px;top:177px;width:45px;height:21px;background:#f9f9f9;border:1px solid #e4e4e4;border-bottom:none"></div>
<div class="a" style="left:635px;top:180px;font-size:11px;letter-spacing:-0.5px;color:#1a1a1a">Aufbau</div>
<div class="a" style="left:675px;top:179px;width:67px;height:19px;background:#f0f0f0;border:1px solid #e0e0e0;border-bottom:none;border-left:none"></div>
<div class="a" style="left:679px;top:181px;font-size:11px;letter-spacing:-0.5px;color:#1a1a1a">Beschreibung</div>
<div class="a" style="left:632px;top:197px;width:317px;height:595px;background:#f0f0f0;border:1px solid #d8d8d8"></div>
<div class="a" style="left:633px;top:198px;width:2px;height:593px;background:#777"></div>
<div class="a" style="left:633px;top:198px;width:315px;height:2px;background:#777"></div>
<div class="a" style="left:635px;top:200px;width:313px;height:392px;background:#fff"></div>
<div class="a" style="left:635px;top:775px;width:313px;height:1px;background:#fafafa"></div>
<div class="a" style="left:648px;top:783px;width:144px;height:2px;background:#8a8a8a"></div>
<svg class="a" style="left:635px;top:200px" width="313" height="280" viewBox="635 200 313 280">
<rect x="685.5" y="204.5" width="55" height="55" fill="#778d98" stroke="#111" stroke-width="1"/>
<path d="M643.75 296.25 L768.75 333.25 L768.75 396.25 L643.75 359.5 Z" fill="#fff6c2"/>
<path d="M643.75 296.25 L700.75 313.1 L700.75 376.4 L643.75 359.5 Z" fill="#ffe645"/>
<rect x="694.5" y="259.5" width="36.5" height="36" fill="#7a5142" stroke="#111" stroke-width="1"/>
<path d="M695 283.5h6v-3h8v-3h8v-3h8v-3h6" fill="none" stroke="#111" stroke-width="1.3"/>
<rect x="700.5" y="295.5" width="11.5" height="96" fill="#fff"/>
<rect x="701.2" y="295.5" width="3.2" height="96" fill="#1e88e5" stroke="#0a2a60" stroke-width="0.5"/>
<rect x="708.6" y="295.5" width="3.0" height="96" fill="#1e88e5" stroke="#0a2a60" stroke-width="0.5"/>
<rect x="694.5" y="391.5" width="36.5" height="36" fill="#7a5142" stroke="#111" stroke-width="1"/>
<path d="M695 403.5h6v3h8v3h8v3h8v3h6" fill="none" stroke="#111" stroke-width="1.3"/>
<rect x="676" y="427.5" width="92.5" height="9" fill="#778d98" stroke="#111" stroke-width="1"/>
<rect x="685.5" y="436.5" width="55" height="27" fill="#778d98" stroke="#111" stroke-width="1"/>
<path d="M714.7 261.8h64" stroke="#2a2af0" stroke-width="1.1"/><circle cx="714.7" cy="261.6" r="2" fill="#2a2af0"/>
<path d="M731.25 343.8h46" stroke="#2a2af0" stroke-width="1.1"/><circle cx="731.25" cy="343.6" r="2" fill="#2a2af0"/>
</svg>
<div class="a" style="left:760px;top:205px;font-size:18px;font-weight:bold;color:#000;white-space:nowrap">Dachflächenfenster</div>
<div class="a" style="left:760px;top:225px;font-size:13px;letter-spacing:-0.4px;color:#111;white-space:nowrap">U-Wert = 3,709 W/(m²K)</div>
<div class="a" style="left:783px;top:257px;font-size:10px;color:#111;white-space:nowrap">33 % Rahmenanteil</div>
<div class="a" style="left:783px;top:340px;font-size:10px;color:#111;white-space:nowrap">g-Wert = 0,78</div>
<div class="a" style="left:759.5px;top:454px;font-size:10px;color:#111;white-space:nowrap">(schematische Darstellung)</div>
<!-- small buttons -->
<svg class="a" style="left:639px;top:567px" width="70" height="18" viewBox="639 567 70 18">
<rect x="639.5" y="567.5" width="17.5" height="17.5" rx="2" fill="#f4f4f4" stroke="#d0d0d0"/>
<rect x="643" y="571" width="11" height="11" fill="#111"/><rect x="644.5" y="571.5" width="8" height="1.2" fill="#e02020"/><rect x="644.5" y="572.7" width="8" height="3.3" fill="#fff"/><rect x="646" y="578" width="5" height="3.5" fill="#fff"/>
<rect x="665" y="567.5" width="17.5" height="17.5" rx="2" fill="#f4f4f4" stroke="#d0d0d0"/>
<rect x="668" y="571" width="9" height="11" fill="#f5d84a" stroke="#777" stroke-width="0.6"/><rect x="671" y="574" width="8" height="9" fill="#fff" stroke="#111" stroke-width="1"/><path d="M672.5 577h5M672.5 579h5" stroke="#111" stroke-width="0.7"/>
<rect x="691" y="567.5" width="17.5" height="17.5" rx="2" fill="#f4f4f4" stroke="#d0d0d0"/>
<rect x="694" y="577" width="12" height="5" fill="#777"/><rect x="697" y="570.5" width="6" height="6.5" fill="#fff" stroke="#333" stroke-width="0.8"/><path d="M694 579.5h12" stroke="#ccc" stroke-width="0.8"/>
</svg>
<!-- ANNOTATION -->
<svg class="a" style="left:200px;top:60px" width="90" height="430" viewBox="200 60 90 430">
<rect x="250.5" y="66.5" width="27.5" height="32.5" fill="none" stroke="#ff0a55" stroke-width="3.2"/>
<path d="M250 99 H208.7 V467" fill="none" stroke="#ff4f70" stroke-width="1.8"/>
<path d="M202.3 465.2 L208.7 467.6 L215 465.2 L208.7 477.6 Z" fill="none" stroke="#ff4f70" stroke-width="1.8" stroke-linejoin="round"/>
</svg>
<div class="a" style="left:125px;top:484px;width:334px;height:60px;background:#fff;border:3.75px solid #ff0a55;box-shadow:0 0 4px rgba(0,0,0,0.18)"></div>
<div class="a" style="left:150.5px;top:491.5px;font-size:16.5px;letter-spacing:0.2px;line-height:22.5px;color:#ff5272;white-space:nowrap">eine Konstruktion aus der Datenbank<br>überschreibt die gültige Konstruktion</div>
<!-- RIGHT PANEL -->
<div class="a" style="left:955px;top:69px;width:205px;height:728px;background:#f0f0f0"></div>
<div class="a" style="left:956px;top:69px;width:181px;height:19px;background:#fff;border-bottom:1px solid #bcbcbc"></div>
<div class="a" style="left:958.5px;top:72.5px;font-size:11px;letter-spacing:-0.4px;color:#111">Ist-Zustand</div>
<svg class="a" style="left:1123px;top:75px" width="10" height="6" viewBox="0 0 10 6"><path d="M1 1l4 4l4-4" fill="none" stroke="#555" stroke-width="1"/></svg>
<div class="a" style="left:1138px;top:68.5px;width:19px;height:19px;border:1.6px solid #2f7cc4;border-radius:4px;background:#a9cf38"></div>
<div class="a" style="left:1138px;top:70px;width:19px;text-align:center;font-size:15.5px;color:#fff">A</div>
<!-- frame -->
<div class="a" style="left:956px;top:88px;width:204px;height:688px;background:#7a7a7a"></div>
<!-- card 1 -->
<div class="card" style="left:958px;top:90px;width:200px;height:309px"></div>
<div class="ct" style="left:971px;top:97px;font-size:16.5px">GEG 2024</div>
<div class="cs" style="left:971px;top:116px;font-size:12.5px">DIN V 18599</div>
<div class="a" style="left:1128.5px;top:100px;width:16px;height:16px;border-radius:50%;background:#bb2a28"></div>
<div class="bx" style="left:974px;top:136px;width:169px;height:122px"></div>
<div class="a" style="left:974px;top:136px;width:13px;height:122px;background:#d0d0d0"></div>
<div class="a" style="left:993px;top:136px;width:150px;height:122px;background:#b72a28"></div>
<div class="vt" style="left:950px;top:191px;width:60px;text-align:center;font-size:8px;color:#222;text-shadow:0 0 0.4px #222">Effizienzklasse</div>
<svg class="a" style="left:1036px;top:150px" width="66" height="83" viewBox="0 0 66 83"><rect x="0" y="0" width="12.5" height="83" fill="#fff"/><rect x="53" y="0" width="12.5" height="83" fill="#fff"/><rect x="0" y="35.5" width="65" height="11" fill="#fff"/></svg>
<div class="a" style="left:1036px;top:238px;font-size:13px;letter-spacing:-0.28px;color:#fff;white-space:nowrap;text-shadow:0 0 0.5px #fff"><b>363,3</b> kWh/(m²a)</div>
<!-- QP -->
<div class="bx" style="left:974px;top:264px;width:169px;height:46px"></div>
<div class="a" style="left:974px;top:264px;width:13px;height:46px;background:#d0d0d0"></div>
<div class="vt" style="left:969px;top:281px;width:20px;text-align:center;font-size:8.5px;color:#222">QP</div>
<div class="bar" style="left:994px;top:264px;width:89px;height:15px;background:#d4d4d4">74 kWh/(m²a)</div>
<div class="bar" style="left:994px;top:279px;width:125px;height:15px;background:#3d7eb8">104 kWh/(m²a)</div>
<div class="bar grad" style="left:994px;top:294px;width:149px;height:16px">400 kWh/(m²a)</div>
<!-- HT -->
<div class="bx" style="left:974px;top:316px;width:169px;height:46px"></div>
<div class="a" style="left:974px;top:316px;width:13px;height:46px;background:#d0d0d0"></div>
<div class="vt" style="left:969px;top:333px;width:20px;text-align:center;font-size:8.5px;color:#222">HT</div>
<div class="bar" style="left:994px;top:316px;width:76px;height:15px;background:#d4d4d4">0,39 W/(m²K)</div>
<div class="bar" style="left:994px;top:331px;width:134px;height:15px;background:#3d7eb8">0,70 W/(m²K)</div>
<div class="bar grad" style="left:994px;top:346px;width:149px;height:16px">1,21 W/(m²K)</div>
<!-- EH -->
<div class="bx" style="left:974px;top:368px;width:169px;height:17px"></div>
<div class="a" style="left:974px;top:368px;width:13px;height:17px;background:#d0d0d0"></div>
<div class="vt" style="left:969px;top:370px;width:20px;text-align:center;font-size:8.5px;color:#222">EH</div>
<div class="a" style="left:994px;top:368px;width:35px;height:16px;background:#bb2a28;color:#fff;font-size:7.5px;font-weight:bold;text-align:right;line-height:16px;padding-right:1px">40</div>
<div class="a" style="left:1031px;top:368px;width:12.5px;height:16px;background:#bb2a28;color:#fff;font-size:7.5px;font-weight:bold;text-align:right;line-height:16px">55</div>
<div class="a" style="left:1045px;top:368px;width:12px;height:16px;background:#bb2a28;color:#fff;font-size:7.5px;font-weight:bold;text-align:right;line-height:16px">70</div>
<div class="a" style="left:1058.5px;top:368px;width:12.5px;height:16px;background:#bb2a28;color:#fff;font-size:7.5px;font-weight:bold;text-align:right;line-height:16px">85</div>
<div class="a" style="left:1073px;top:368px;width:69px;height:16px;background:#bb2a28;color:#fff;font-size:7.5px;font-weight:bold;text-align:right;line-height:16px;padding-right:1px">160</div>
<!-- card 2 -->
<div class="card" style="left:958px;top:404px;width:200px;height:96px"></div>
<div class="ct" style="left:971px;top:410px;font-size:16px;line-height:19px">Erneuerbare<br>Energien</div>
<div class="a" style="left:1128.5px;top:414px;width:16px;height:16px;border-radius:50%;background:#bb2a28"></div>
<div class="bx" style="left:974px;top:453px;width:168px;height:31px"></div>
<div class="a" style="left:974px;top:453px;width:13px;height:31px;background:#d0d0d0"></div>
<div class="vt" style="left:970px;top:463px;width:20px;text-align:center;font-size:8px">EE</div>
<div class="bar" style="left:994px;top:453px;width:96px;height:15px;background:#d4d4d4">65 %</div>
<div class="bar" style="left:994px;top:468px;width:96px;height:15px">0,00 %</div>
<!-- card 3 -->
<div class="card" style="left:958px;top:503px;width:200px;height:75px"></div>
<div class="ct" style="left:971px;top:510px;font-size:16px;line-height:19.5px">Sommerlicher<br>Wärmeschutz</div>
<div class="cs" style="left:971px;top:549px;font-size:12px">DIN 4108-2</div>
<div class="a" style="left:1128px;top:514px;width:17px;height:16px;border-radius:50%;border:1.2px solid #222;background:#fff"></div>
<!-- card 4 -->
<div class="card" style="left:958px;top:580px;width:200px;height:92px"></div>
<div class="ct" style="left:971px;top:588px;font-size:16px">Lüftungskonzept</div>
<div class="cs" style="left:971px;top:606px;font-size:12px">DIN 1946-6</div>
<div class="a" style="left:1128px;top:591px;width:16px;height:16px;border-radius:50%;background:#7bb22c"></div>
<div class="bx" style="left:974px;top:626px;width:169px;height:31px"></div>
<div class="a" style="left:974px;top:626px;width:13px;height:31px;background:#d0d0d0"></div>
<div class="vt" style="left:965px;top:637px;width:30px;text-align:center;font-size:7px">inf min</div>
<div class="bar" style="left:994px;top:626px;width:74px;height:15px;background:#d4d4d4">26 m³/h</div>
<div class="bar" style="left:994px;top:641px;width:57px;height:15px;background:linear-gradient(#6fa7d8,#3d7eb8)">20 m³/h</div>
<!-- card 5 -->
<div class="card" style="left:958px;top:675px;width:200px;height:99px"></div>
<div class="ct" style="left:971px;top:683px;font-size:16px">Beratung</div>
<div class="cs" style="left:971px;top:701px;font-size:12px">DIN V 18599</div>
<div class="bx" style="left:974px;top:721px;width:169px;height:15px"></div>
<div class="a" style="left:974px;top:721px;width:13px;height:15px;background:#d0d0d0"></div>
<div class="vt" style="left:970px;top:722px;width:20px;text-align:center;font-size:9px;color:#222">QP</div>
<div class="bar grad" style="left:994px;top:721px;width:149px;height:15px">238 kWh/(m²a)</div>
<div class="bx" style="left:974px;top:742px;width:169px;height:16px"></div>
<div class="a" style="left:974px;top:742px;width:13px;height:16px;background:#d0d0d0"></div>
<div class="vt" style="left:970px;top:744px;width:20px;text-align:center;font-size:8.5px;color:#222">CO2</div>
<div class="bar grad" style="left:994px;top:742px;width:130px;height:15px">70 kg/(m²a)</div>
</body></html>
